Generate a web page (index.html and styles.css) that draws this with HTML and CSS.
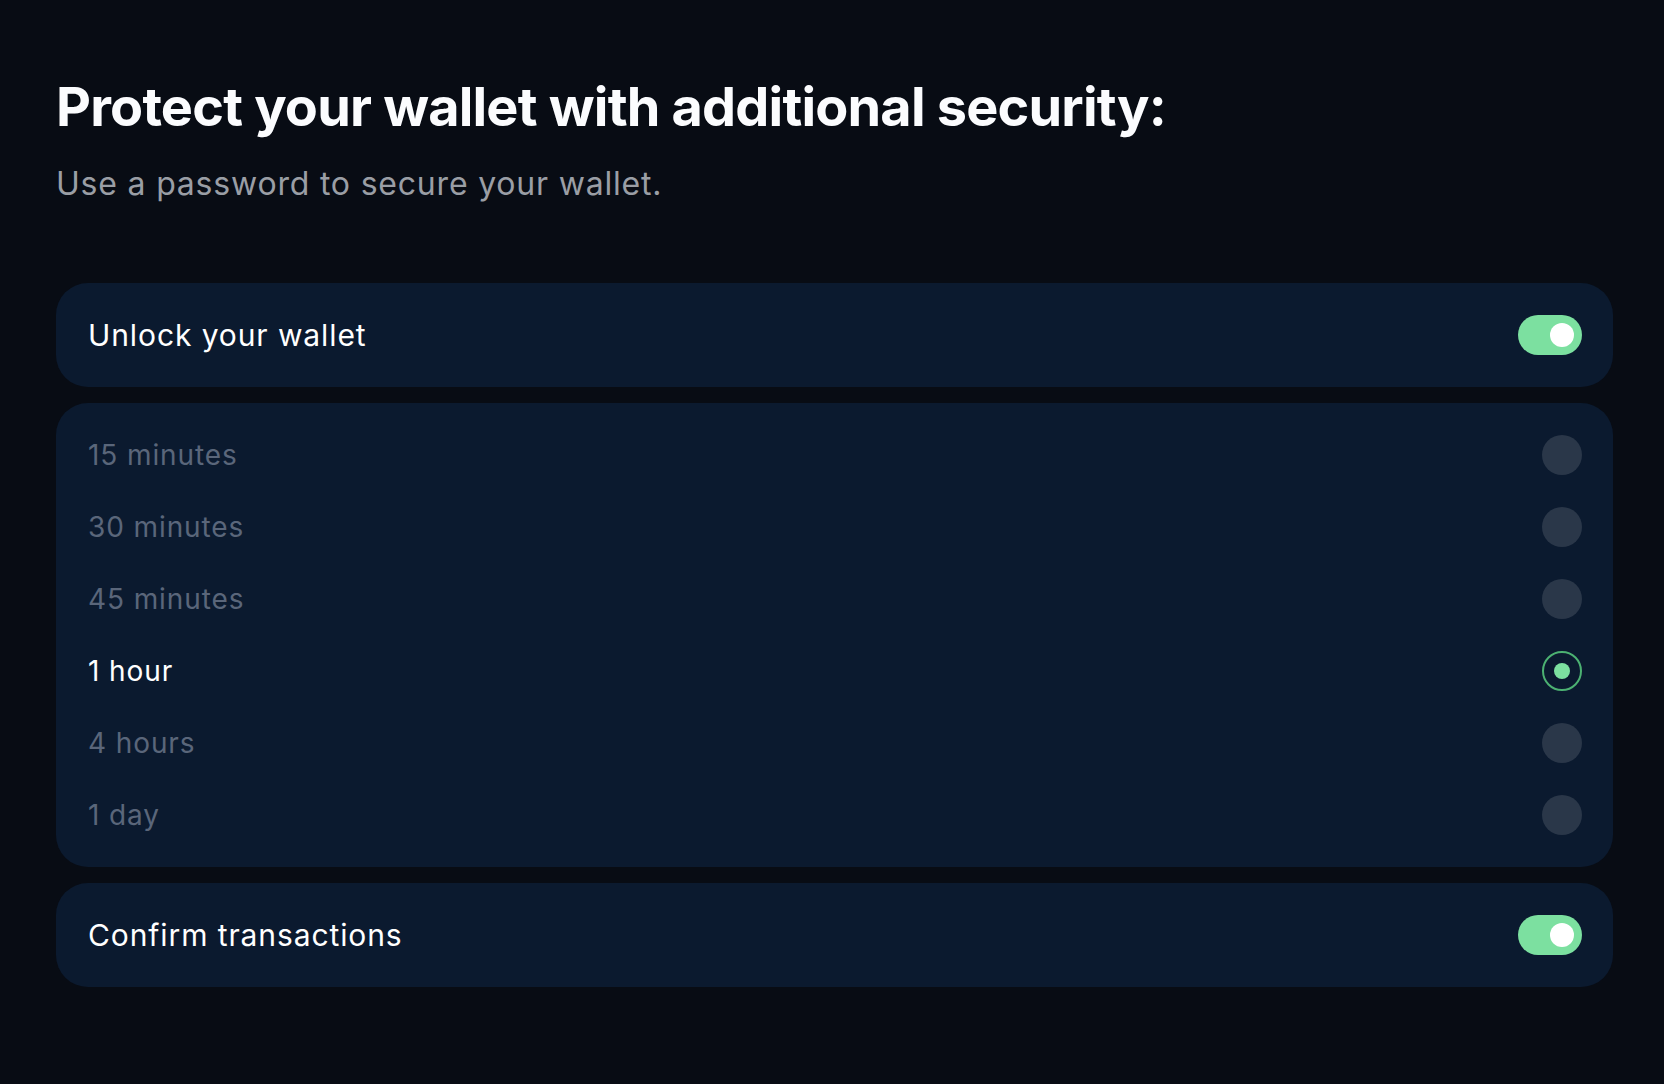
FILE: index.html
```html
<!DOCTYPE html>
<html lang="en">
<head>
  <meta charset="UTF-8">
  <meta name="viewport" content="width=device-width, initial-scale=1.0">
  <title>Security</title>
  <link rel="stylesheet" href="styles.css">
</head>
<body>
  <div class="stranka">
    <h1 class="nadpis">Protect your wallet with additional security:</h1>
    <p class="popis">Use a password to secure your wallet.</p>

    <div class="karty">
      <div class="karta">
        <span class="karta-text">Unlock your wallet</span>
        <span class="prepinac zapnuto"><span class="knofl"></span></span>
      </div>

      <div class="karta seznam">
        <div class="volba"><span>15 minutes</span><span class="radio"></span></div>
        <div class="volba"><span>30 minutes</span><span class="radio"></span></div>
        <div class="volba"><span>45 minutes</span><span class="radio"></span></div>
        <div class="volba vybrano"><span>1 hour</span><span class="radio"></span></div>
        <div class="volba"><span>4 hours</span><span class="radio"></span></div>
        <div class="volba"><span>1 day</span><span class="radio"></span></div>
      </div>

      <div class="karta">
        <span class="karta-text">Confirm transactions</span>
        <span class="prepinac zapnuto"><span class="knofl"></span></span>
      </div>
    </div>
  </div>
</body>
</html>
```

FILE: styles.css
```css
html, body {
  margin: 0;
  padding: 0;
  height: 100%;
}
body {
  background-color: #080c14;
  font-family: Inter, "Liberation Sans", sans-serif;
  color: white;
}
.stranka {
  padding: 75px 51px 0 56px;
}
.nadpis {
  margin: 0;
  font-size: 54px;
  line-height: 64px;
  font-weight: 700;
  letter-spacing: -0.8px;
  color: #fbfcfe;
}
.popis {
  margin: 25px 0 0 0;
  font-size: 32px;
  line-height: 40px;
  color: #9a9ea5;
  letter-spacing: 0.8px;
}
.karty {
  margin-top: 79px;
  display: flex;
  flex-direction: column;
  gap: 16px;
}
.karta {
  background-color: #0b1a2f;
  border-radius: 32px;
  padding: 32px 31px 32px 32px;
  display: flex;
  align-items: center;
  justify-content: space-between;
}
.karta-text {
  font-size: 30px;
  line-height: 40px;
  letter-spacing: 0.9px;
}
.prepinac {
  width: 64px;
  height: 40px;
  border-radius: 20px;
  background-color: #2a3749;
  display: flex;
  align-items: center;
  padding: 0 8px;
  box-sizing: border-box;
}
.zapnuto {
  background-color: #7ce0a0;
  justify-content: flex-end;
}
.knofl {
  width: 24px;
  height: 24px;
  border-radius: 50%;
  background-color: white;
}
.seznam {
  flex-direction: column;
  align-items: stretch;
  gap: 32px;
}
.volba {
  display: flex;
  align-items: center;
  justify-content: space-between;
  font-size: 28px;
  line-height: 40px;
  color: #5a667a;
  letter-spacing: 0.9px;
}
.radio {
  width: 40px;
  height: 40px;
  border-radius: 50%;
  background-color: #2a3749;
  box-sizing: border-box;
  display: flex;
  align-items: center;
  justify-content: center;
}
.vybrano {
  color: white;
}
.vybrano .radio {
  background-color: transparent;
  border: 2px solid #4cb172;
}
.vybrano .radio::after {
  content: "";
  width: 16px;
  height: 16px;
  border-radius: 50%;
  background-color: #7ce0a0;
}
```
